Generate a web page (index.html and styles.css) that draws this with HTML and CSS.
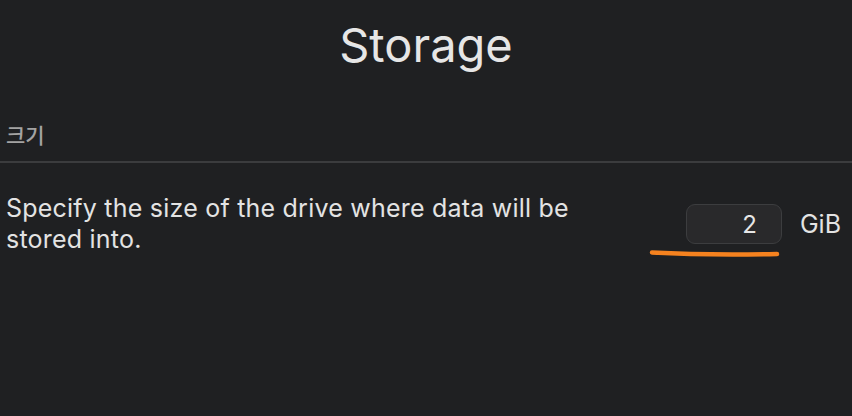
FILE: index.html
```html
<!DOCTYPE html>
<html>

<head>
    <title>Storage</title>
    <link rel="stylesheet" href="styles.css">
</head>

<body>
    <h1 class="title">Storage</h1>

    <div class="section-label">크기</div>

    <div class="row">
        <p class="description">Specify the size of the drive where data will be stored into.</p>
        <div class="size-field">
            <div class="input-wrap">
                <input class="size-input" type="text" value="2">
                <!-- hand drawn marker under the field -->
                <svg class="marker" width="132" height="10" viewBox="0 0 132 10">
                    <path d="M3 4.5 C 40 6.5, 90 6.8, 128 6" stroke="#f5821f" stroke-width="4.5" stroke-linecap="round" fill="none" />
                </svg>
            </div>
            <span class="unit">GiB</span>
        </div>
    </div>
</body>

</html>
```
FILE: styles.css
```css
body {
    margin: 0;
    background: #1f2022;
    color: #e3e3e3;
    font-family: Inter, "Noto Sans CJK KR", sans-serif;
    height: 416px;
    overflow: hidden;
}

.title {
    margin: 0;
    padding-top: 16px;
    height: 84px;
    text-align: center;
    font-size: 47px;
    font-weight: 400;
    line-height: 58px;
    color: #e6e6e6;
}

.section-label {
    padding: 19px 6px 0;
    height: 42px;
    font-family: "Noto Sans CJK KR", sans-serif;
    font-size: 21px;
    font-weight: 500;
    color: #a3a3a3;
    border-bottom: 2px solid #3b3c3e;
}

.row {
    display: flex;
    justify-content: space-between;
    align-items: flex-start;
    padding: 30px 11px 0 6px;
}

.description {
    margin: 0;
    width: 600px;
    font-size: 25px;
    letter-spacing: 0.22px;
    line-height: 31px;
}

.size-field {
    display: flex;
    align-items: center;
    gap: 18px;
    margin-top: 11px;
}

.input-wrap {
    position: relative;
}

.size-input {
    box-sizing: border-box;
    width: 96px;
    height: 40px;
    padding: 0 24px 0 10px;
    background: #29292b;
    border: 1px solid #3c3d3f;
    border-radius: 9px;
    color: #e6e6e6;
    font-family: Inter, sans-serif;
    font-size: 24px;
    text-align: right;
    outline: none;
}

.marker {
    position: absolute;
    left: -37px;
    top: 44px;
}

.unit {
    font-size: 25px;
    color: #e3e3e3;
}
```
